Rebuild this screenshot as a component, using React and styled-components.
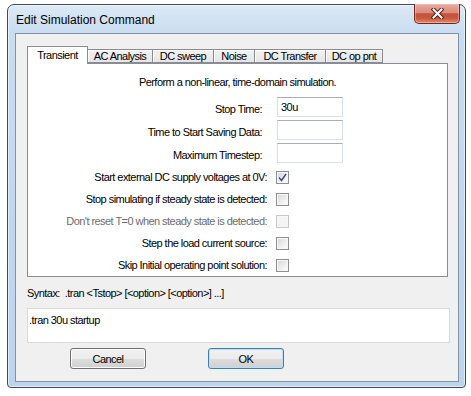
import React from "react";
import styled, { createGlobalStyle } from "styled-components";

const GlobalStyle = createGlobalStyle`
  html, body {
    margin: 0;
    padding: 0;
    background: #ffffff;
  }
  body {
    font-family: "Liberation Sans", Arial, sans-serif;
  }
`;

const Tabs = [
  { label: "Transient", width: 61, active: true },
  { label: "AC Analysis", width: 66 },
  { label: "DC sweep", width: 62 },
  { label: "Noise", width: 42 },
  { label: "DC Transfer", width: 72 },
  { label: "DC op pnt", width: 58 },
];

const Fields = [
  { label: "Stop Time:", value: "30u" },
  { label: "Time to Start Saving Data:", value: "" },
  { label: "Maximum Timestep:", value: "" },
];

const Checks = [
  { label: "Start external DC supply voltages at 0V:", checked: true },
  { label: "Stop simulating if steady state is detected:" },
  { label: "Don't reset T=0 when steady state is detected:", disabled: true },
  { label: "Step the load current source:" },
  { label: "Skip Initial operating point solution:" },
];

const CloseGlyph = () => (
  <svg width="13" height="11" viewBox="0 0 13 11">
    <path
      d="M2.5 1.5 L10.5 9.5 M10.5 1.5 L2.5 9.5"
      stroke="#5a1a10"
      strokeWidth="4"
      strokeLinecap="square"
      fill="none"
    />
    <path
      d="M2.5 1.5 L10.5 9.5 M10.5 1.5 L2.5 9.5"
      stroke="#ffffff"
      strokeWidth="2"
      strokeLinecap="square"
      fill="none"
    />
  </svg>
);

const CheckMark = () => (
  <svg width="9" height="9" viewBox="0 0 9 9">
    <path
      d="M1 4.5 L3.5 7.5 L8 1"
      stroke="#2b4c9c"
      strokeWidth="1.4"
      fill="none"
    />
  </svg>
);

const App = () => {
  return (
    <>
      <GlobalStyle />
      <Page>
        <Window>
          <TitleBar>
            <Title>Edit Simulation Command</Title>
            <CloseButton>
              <CloseGlyph />
            </CloseButton>
          </TitleBar>
          <Client>
            <TabStrip>
              {Tabs.map((tab) => (
                <Tab key={tab.label} $width={tab.width} $active={tab.active}>
                  {tab.label}
                </Tab>
              ))}
            </TabStrip>
            <Panel>
              <Description>
                Perform a non-linear, time-domain simulation.
              </Description>
              <Form>
                {Fields.map((field) => (
                  <Row key={field.label} $height={23}>
                    <Label $pad={14}>{field.label}</Label>
                    <Input defaultValue={field.value} />
                  </Row>
                ))}
                {Checks.map((check) => (
                  <Row key={check.label} $height={22}>
                    <Label $pad={9} $disabled={check.disabled}>
                      {check.label}
                    </Label>
                    <CheckBox $disabled={check.disabled}>
                      {check.checked && <CheckMark />}
                    </CheckBox>
                  </Row>
                ))}
              </Form>
            </Panel>
            <Syntax>{"Syntax:  .tran <Tstop> [<option> [<option>] ...]"}</Syntax>
            <Command defaultValue=".tran 30u startup" />
            <ButtonRow>
              <Button>Cancel</Button>
              <Button $default>OK</Button>
            </ButtonRow>
          </Client>
        </Window>
      </Page>
    </>
  );
};

//----------------------- Window CSS ----------------------------------
//---------------------------------------------------------------------

const Page = styled.div`
  padding: 4px 0 0 7px;
`;

const Window = styled.div`
  box-sizing: border-box;
  width: 459px;
  height: 384px;
  display: flex;
  flex-direction: column;
  padding: 0 6px 5px 7px;

  border: 1px solid #3f4b58;
  border-radius: 7px 7px 4px 4px;
  background: linear-gradient(
    to bottom,
    #dde9f6 0px,
    #c9dcf0 28px,
    #c1d7ee 60%,
    #bdd4ec 100%
  );
  box-shadow: inset 0 0 0 1px rgba(255, 255, 255, 0.55);
`;

const TitleBar = styled.div`
  height: 28px;
  display: flex;
  align-items: flex-start;
`;

const Title = styled.div`
  margin-top: 8px;
  padding-left: 1px;
  font-size: 12px;
  line-height: 14px;
  color: #000000;
`;

const CloseButton = styled.div`
  box-sizing: border-box;
  width: 46px;
  height: 20px;
  margin: -1px -1px 0 auto;
  display: flex;
  align-items: center;
  justify-content: center;

  border: 1px solid #6e2a20;
  border-top: none;
  border-radius: 0 0 5px 5px;
  background: linear-gradient(
    to bottom,
    #e9a99b 0%,
    #dc8b7c 45%,
    #c3503e 52%,
    #c9593f 75%,
    #df8d6d 100%
  );
  box-shadow: inset 0 0 0 1px rgba(255, 210, 200, 0.45);
`;

const Client = styled.div`
  flex: 1;
  display: flex;
  flex-direction: column;
  padding: 12px 0 0 11px;

  border: 1px solid #7f93a8;
  background: #f0f0f0;
  font-size: 11px;
  letter-spacing: -0.55px;
  color: #000000;
`;

//---------------------------  Tab CSS  -------------------------------
//---------------------------------------------------------------------

const TabStrip = styled.div`
  height: 17px;
  display: flex;
  align-items: flex-end;
  position: relative;
  z-index: 1;
`;

const Tab = styled.div`
  box-sizing: border-box;
  width: ${(p) => p.$width}px;
  height: ${(p) => (p.$active ? 18 : 14)}px;
  margin-bottom: ${(p) => (p.$active ? -1 : 0)}px;
  margin-left: -1px;
  &:first-child {
    margin-left: 0;
  }
  display: flex;
  align-items: center;
  justify-content: center;
  padding-bottom: ${(p) => (p.$active ? 2 : 0)}px;

  border: 1px solid #898c95;
  border-bottom: ${(p) => (p.$active ? "none" : "1px solid #898c95")};
  background: ${(p) =>
    p.$active ? "#ffffff" : "linear-gradient(to bottom, #f3f3f3, #e5e5e5)"};
  box-shadow: ${(p) => (p.$active ? "none" : "inset 1px 1px 0 #ffffff")};
  white-space: nowrap;
  position: relative;
  z-index: ${(p) => (p.$active ? 2 : 1)};
`;

const Panel = styled.div`
  box-sizing: border-box;
  width: 421px;
  height: 214px;
  display: flex;
  flex-direction: column;

  border: 1px solid #898c95;
  background: #ffffff;
`;

const Description = styled.div`
  margin-top: 11px;
  line-height: 14px;
  text-align: center;
`;

//---------------------------  Form CSS  ------------------------------
//---------------------------------------------------------------------

const Form = styled.div`
  margin-top: 8px;
  display: flex;
  flex-direction: column;
`;

const Row = styled.div`
  height: ${(p) => p.$height}px;
  display: grid;
  grid-template-columns: 248px auto;
  align-items: center;
`;

const Label = styled.div`
  padding-right: ${(p) => p.$pad}px;
  text-align: right;
  white-space: nowrap;
  color: ${(p) => (p.$disabled ? "#6d6d6d" : "#000000")};
`;

const Input = styled.input`
  box-sizing: border-box;
  width: 66px;
  height: 20px;
  margin: 0 0 3px 1px;
  padding: 0 3px;
  align-self: start;

  border: 1px solid #dbdfe6;
  border-top-color: #abadb3;
  font-family: "Liberation Sans", Arial, sans-serif;
  font-size: 11px;
  letter-spacing: -0.55px;
  color: #000000;
  outline: none;
`;

const CheckBox = styled.div`
  box-sizing: border-box;
  width: 13px;
  height: 13px;
  display: flex;
  align-items: center;
  justify-content: center;

  border: 1px solid ${(p) => (p.$disabled ? "#c8c8c8" : "#8e8f8f")};
  background: ${(p) =>
    p.$disabled
      ? "#f4f4f4"
      : "linear-gradient(135deg, #d6d6d6 0%, #f4f4f4 70%, #ffffff 100%)"};
  box-shadow: inset 0 0 0 1px #f7f7f7;
`;

//---------------------------  Bottom CSS  ----------------------------
//---------------------------------------------------------------------

const Syntax = styled.div`
  margin-top: 9px;
  line-height: 14px;
  white-space: pre;
`;

const Command = styled.textarea`
  box-sizing: border-box;
  width: 423px;
  height: 35px;
  margin: 8px 0 0 0;
  padding: 4px 1px 0 1px;
  resize: none;

  border: 1px solid #dadada;
  background: #ffffff;
  font-family: "Liberation Sans", Arial, sans-serif;
  font-size: 11px;
  line-height: 14px;
  letter-spacing: -0.55px;
  color: #000000;
  outline: none;
  overflow: hidden;
`;

const ButtonRow = styled.div`
  margin-top: 5px;
  padding-left: 43px;
  display: flex;
  gap: 62px;
`;

const Button = styled.div`
  box-sizing: border-box;
  width: 76px;
  height: 21px;
  display: flex;
  align-items: center;
  justify-content: center;

  border: 1px solid ${(p) => (p.$default ? "#3c7fb1" : "#707070")};
  border-radius: 3px;
  background: linear-gradient(
    to bottom,
    #f2f2f2 0%,
    #ebebeb 50%,
    #dddddd 51%,
    #cfcfcf 100%
  );
  box-shadow: inset 0 0 0 1px ${(p) => (p.$default ? "#b9e0f7" : "#fcfcfc")};
`;

export default App;
